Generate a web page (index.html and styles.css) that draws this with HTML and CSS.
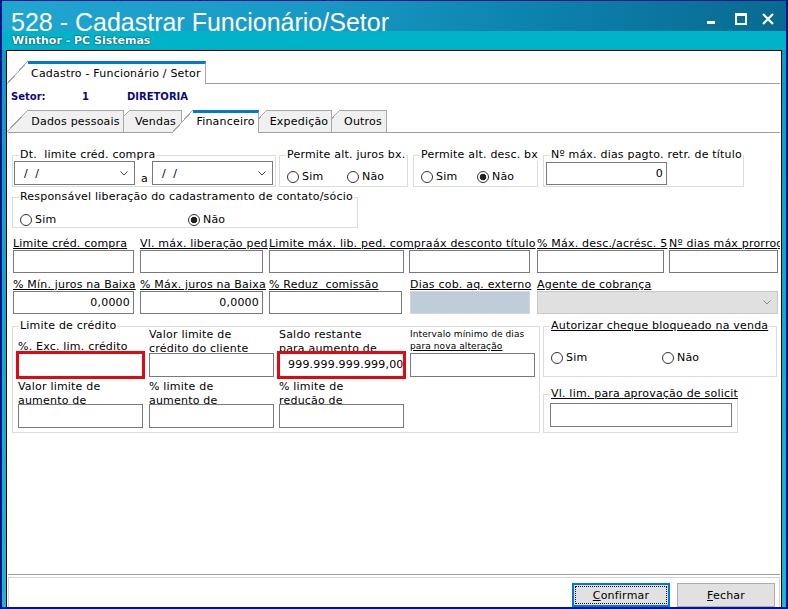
FILE: index.html
```html
<!DOCTYPE html>
<html>
<head>
	<meta charset="UTF-8">
	<title>528 - Cadastrar Funcionário/Setor</title>
	<link rel="stylesheet" href="styles.css">
</head>
<body>
<div class="window">
	<div class="titlebar">
		<div class="caption">
			<div class="title">528 - Cadastrar Funcionário/Setor</div>
			<div class="vendor">Winthor - PC Sistemas</div>
		</div>
		<div class="controls">
			<span class="min"></span>
			<span class="max"></span>
			<svg class="close" width="12" height="12" viewBox="0 0 12 12"><path d="M1 1L11 11M11 1L1 11" stroke="#fff" stroke-width="2.2"/></svg>
		</div>
	</div>
	<div class="frame">
		<div class="content">
			<div class="tabs top">
				<div class="tab on">Cadastro - Funcionário / Setor</div>
			</div>
			<div class="setor"><strong>Setor:</strong><strong>1</strong><strong>DIRETORIA</strong></div>
			<div class="tabs inner">
				<div class="tab">Dados pessoais</div>
				<div class="tab">Vendas</div>
				<div class="tab on">Financeiro</div>
				<div class="tab">Expedição</div>
				<div class="tab">Outros</div>
			</div>

			<div class="page">
				<div class="row">
					<fieldset class="g g-dt">
						<legend>Dt.&nbsp; limite créd. compra</legend>
						<div class="dt">
							<div class="combo"><span>/&nbsp; /</span><svg width="8" height="5" viewBox="0 0 8 5"><path d="M.5 .5L4 4L7.5 .5" fill="none" stroke="#444"/></svg></div>
							<span class="a">a</span>
							<div class="combo"><span>/&nbsp; /</span><svg width="8" height="5" viewBox="0 0 8 5"><path d="M.5 .5L4 4L7.5 .5" fill="none" stroke="#444"/></svg></div>
						</div>
					</fieldset>
					<fieldset class="g g-juros">
						<legend>Permite alt. juros bx.</legend>
						<div class="opts">
							<span class="radio"><i></i>Sim</span>
							<span class="radio"><i></i>Não</span>
						</div>
					</fieldset>
					<fieldset class="g g-desc">
						<legend>Permite alt. desc. bx</legend>
						<div class="opts">
							<span class="radio"><i></i>Sim</span>
							<span class="radio on"><i></i>Não</span>
						</div>
					</fieldset>
					<fieldset class="g g-dias">
						<legend>Nº máx. dias pagto. retr. de título</legend>
						<div class="edit num">0</div>
					</fieldset>
				</div>

				<div class="row r2">
					<fieldset class="g g-resp">
						<legend>Responsável liberação do cadastramento de contato/sócio</legend>
						<div class="opts">
							<span class="radio"><i></i>Sim</span>
							<span class="radio on"><i></i>Não</span>
						</div>
					</fieldset>
				</div>

				<div class="fields r3">
					<div class="f c1"><span class="lbl"><span>Limite créd. compra</span></span><div class="edit"></div></div>
					<div class="f c2 cut"><span class="lbl"><span>Vl. máx. liberação ped</span></span><div class="edit"></div></div>
					<div class="f c3 over"><span class="lbl"><span>Limite máx. lib. ped. compra</span></span><div class="edit"></div></div>
					<div class="f c4"><span class="lbl"><span>% Máx desconto título</span></span><div class="edit"></div></div>
					<div class="f c5 cut"><span class="lbl"><span>% Máx. desc./acrésc. 5</span></span><div class="edit"></div></div>
					<div class="f c6 over"><span class="lbl"><span>Nº dias máx prorrog</span></span><div class="edit"></div></div>
				</div>

				<div class="fields r4">
					<div class="f c1"><span class="lbl"><span>% Mín. juros na Baixa</span></span><div class="edit num">0,0000</div></div>
					<div class="f c2"><span class="lbl"><span>% Máx. juros na Baixa</span></span><div class="edit num">0,0000</div></div>
					<div class="f d3"><span class="lbl"><span>% Reduz&nbsp; comissão</span></span><div class="edit"></div></div>
					<div class="f d4"><span class="lbl"><span>Dias cob. aq. externo</span></span><div class="edit off"></div></div>
					<div class="f d5"><span class="lbl"><span>Agente de cobrança</span></span><div class="combo off"><span></span><svg width="8" height="5" viewBox="0 0 8 5"><path d="M.5 .5L4 4L7.5 .5" fill="none" stroke="#8a8a8a"/></svg></div></div>
				</div>

				<div class="row r5">
					<fieldset class="g g-lim">
						<legend>Limite de crédito</legend>
						<div class="grid">
							<div><span class="cap one"><span class="u">%. Exc. lim. crédito</span></span><div class="edit mark"></div></div>
							<div><span class="cap">Valor limite de crédito do cliente</span><div class="edit"></div></div>
							<div><span class="cap">Saldo restante para aumento de</span><div class="edit mark val">999.999.999.999,00</div></div>
							<div><span class="cap small">Intervalo mínimo de dias <span class="u">para nova alteração</span></span><div class="edit"></div></div>
							<div class="b"><span class="cap">Valor limite de aumento de</span><div class="edit"></div></div>
							<div class="b"><span class="cap">% limite de aumento de</span><div class="edit"></div></div>
							<div class="b"><span class="cap">% limite de redução de</span><div class="edit"></div></div>
						</div>
					</fieldset>
					<div class="side">
						<fieldset class="g g-aut">
							<legend class="u">Autorizar cheque bloqueado na venda</legend>
							<div class="opts">
								<span class="radio"><i></i>Sim</span>
								<span class="radio"><i></i>Não</span>
							</div>
						</fieldset>
						<fieldset class="g g-vl">
							<legend class="u">Vl. lim. para aprovação de solicit</legend>
							<div class="edit"></div>
						</fieldset>
					</div>
				</div>
			</div>

			<div class="buttons">
				<button class="btn def"><u>C</u>onfirmar</button>
				<button class="btn"><u>F</u>echar</button>
			</div>
		</div>
	</div>
</div>
</body>
</html>
```

FILE: styles.css
```css
* { box-sizing: border-box; }
html, body { margin: 0; }
body { font: 11px "DejaVu Sans", "Liberation Sans", sans-serif; letter-spacing: .2px; color: #000; background: #0b1487; }

/* window chrome */
.window { width: 788px; height: 609px; display: flex; flex-direction: column; border: 2px solid #0b1487; border-top-width: 1px; }
.titlebar { flex: none; height: 49px; display: flex; justify-content: space-between; color: #fff;
	background: linear-gradient(to bottom, rgba(0,0,0,0) 30px, #00b3c8 30px),
		linear-gradient(100deg, #1fa6d1 0%, #1899c5 40%, #0c82ad 68%, #086990 100%); }
.caption { padding: 10px 0 0 9px; }
.title { font: 25px/23px "Liberation Sans", Arial, sans-serif; letter-spacing: 0; }
.vendor { margin-top: 1px; font-weight: bold; line-height: 12px; letter-spacing: 0; padding-left: 1px; text-shadow: 0 0 2px #03465a, 0 0 1px #03465a; }
.controls { display: flex; align-items: flex-start; padding: 12px 12px 0 0; }
.min { width: 8px; height: 3px; margin-top: 8px; background: #fff; }
.max { width: 12px; height: 12px; margin-left: 20px; border: 2px solid #fff; border-top-width: 3px; }
.close { margin-left: 15px; }
.frame { flex: 1; display: flex; padding: 0 4px; background: linear-gradient(#0e9cc2, #1db5d2); }
.content { flex: 1; display: flex; flex-direction: column; background: #fff; border: 1px solid #000; border-bottom: 0; overflow: hidden; }

/* tab strips: the slanted left side is a diagonal drawn in ::before */
.tabs { flex: none; display: flex; align-items: flex-end; height: 23px; margin: 0 1px; border-bottom: 1px solid #a0a0a0; }
.tabs.top { margin-top: 10px; }
.tabs.inner { margin-top: 7px; }
.tab { position: relative; z-index: 1; height: 22px; padding: 3px 4px 0 3px; line-height: 16px; white-space: nowrap;
	border-top: 1px solid #a8a8a8; border-right: 1px solid #a8a8a8; background: #f0f0f0; }
.tab::before { content: ""; position: absolute; left: -21px; top: -1px; bottom: 0; width: 21px;
	background: linear-gradient(to bottom right, rgba(255,255,255,0) calc(50% - .6px), #a8a8a8 calc(50% - .6px), #a8a8a8 calc(50% + .5px), #f0f0f0 calc(50% + .5px)); }
.tab:first-child { margin-left: 20px; }
.tab.on { z-index: 9; height: 23px; margin-bottom: -1px; padding-top: 1px; border-top: 3px solid #0078d7; background: #fff; }
.tab.on::before { top: -3px;
	background: linear-gradient(to bottom right, rgba(255,255,255,0) calc(50% - .6px), #a8a8a8 calc(50% - .6px), #a8a8a8 calc(50% + .5px), #fff calc(50% + .5px)); }
.tabs.top .tab.on { padding-top: 2px; }

.inner .tab { padding: 3px 0 0; text-align: center; }
.inner .tab:nth-child(1) { z-index: 6; width: 96px; }
.inner .tab:nth-child(2) { z-index: 5; width: 52px; margin-left: 6px; }
.inner .tab:nth-child(3) { z-index: 9; width: 66px; margin-left: 11px; padding-top: 1px; }
.inner .tab:nth-child(4) { z-index: 3; width: 65px; margin-left: 8px; }
.inner .tab:nth-child(5) { z-index: 2; width: 47px; margin-left: 8px; }

.setor { flex: none; display: flex; margin-top: 7px; padding-left: 4px; height: 12px; line-height: 12px; font-size: 10px; color: #0a0a80; letter-spacing: 0; }
.setor strong:nth-child(1) { width: 71px; }
.setor strong:nth-child(2) { width: 45px; }

/* tab page */
.page { flex: none; height: 442px; margin: 0 1px; padding: 16px 0 0 4px; border-bottom: 1px solid #a0a0a0; overflow: hidden; }
.row { display: flex; align-items: stretch; }
.r2 { margin-top: 4px; }
.r5 { margin-top: 6px; align-items: flex-start; }

.g { margin: 0; padding: 0; min-width: 0; border: 1px solid #dcdcdc; }
.g legend { margin-left: 6px; padding: 0 1px; line-height: 12px; white-space: nowrap; }
.u { text-decoration: underline; }

.g-dt { width: 264px; }
.g-juros { width: 129px; margin-left: 3px; }
.g-desc { width: 125px; margin-left: 5px; }
.g-dias { width: 201px; margin-left: 5px; }
.g-resp { width: 346px; }

.dt { display: flex; align-items: flex-end; padding: 0 1px 1px; }
.a { margin: 0 4px 0 6px; line-height: 12px; }
.combo { width: 121px; height: 24px; display: flex; align-items: center; justify-content: space-between; padding: 0 6px 0 9px; border: 1px solid #7a7a7a; background: #fff; }
.combo.off { height: 23px; background: #e0e0e0; border-color: #c8c8c8; }

.opts { display: flex; padding: 10px 0 0 7px; }
.g-resp .opts { padding: 11px 0 1px 7px; }
.radio { display: flex; align-items: center; gap: 3px; line-height: 12px; }
.radio i { width: 12px; height: 12px; border: 1px solid #333; border-radius: 50%; background: #fff; }
.radio.on i { background: radial-gradient(circle, #222 0 3px, #fff 3.6px); }
.g-juros .radio:first-child { width: 60px; }
.g-desc .radio:first-child { width: 56px; }
.g-resp .radio:first-child { width: 168px; }
.g-aut .radio:first-child { width: 111px; }

.edit { height: 23px; border: 1px solid #7a7a7a; background: #fff; }
.edit.num { text-align: right; padding-right: 3px; line-height: 21px; }
.edit.off { background: #bfccd9; border-color: #cfd6dd; }
.g-dias .edit { width: 121px; margin: 1px 0 0 2px; }

/* label over field rows */
.fields { display: flex; padding-left: 1px; }
.r3 { margin-top: 10px; }
.r4 { margin-top: 6px; }
.f { position: relative; z-index: 1; flex: none; }
.f.over { z-index: 2; }
.lbl { display: block; height: 12px; line-height: 12px; white-space: nowrap; }
.lbl span { background: #fff; text-decoration: underline; }
.f.cut .lbl { overflow: hidden; }
.c1 { width: 127px; }
.c1 .edit { width: 121px; }
.c2 { width: 129px; }
.c2 .edit { width: 123px; }
.c3 { width: 140px; }
.c3 .edit { width: 135px; }
.c4 { width: 128px; }
.c4 .edit { width: 121px; }
.c5 { width: 132px; }
.c5 .edit { width: 127px; }
.c6 { width: 109px; }
.c6 .edit { width: 109px; }
.d3 { width: 141px; }
.d3 .edit { width: 133px; }
.d4 { width: 127px; }
.d4 .edit { width: 120px; }
.d5 { width: 241px; }
.d5 .combo { width: 241px; }

/* credit limit group */
.g-lim { width: 528px; }
.grid { display: grid; grid-template-columns: 131px 130px 131px 125px; margin: -4px 0 0 5px; padding-bottom: 4px; }
.grid > div:nth-child(-n+4) .cap { height: 25px; }
.grid .b { margin-top: 3px; }
.cap { display: block; width: 100px; height: 24px; line-height: 14px; overflow: hidden; }
.cap.one { width: auto; padding-top: 12px; white-space: nowrap; }
.cap.small { width: 125px; font-size: 9px; line-height: 12px; letter-spacing: .1px; }
.grid .edit { width: 125px; height: 24px; }
.edit.mark { outline: 3px solid #e30613; outline-offset: -1px; }
.edit.val { padding-left: 8px; line-height: 22px; white-space: nowrap; overflow: hidden; }

.side { margin-left: 3px; width: 234px; }
.g-aut { width: 234px; }
.g-aut .opts { padding: 20px 0 12px 7px; }
.g-vl { width: 195px; margin-top: 11px; padding-bottom: 5px; }
.g-vl .edit { width: 182px; height: 24px; margin: 3px 0 0 6px; }

/* bottom button bar */
.buttons { flex: 1; display: flex; justify-content: flex-end; gap: 7px; margin: 2px 1px 0; padding: 5px 4px 0 0; border: 1px solid #d4d4d4; border-bottom: 0; overflow: hidden; }
.btn { flex: none; width: 98px; height: 24px; padding: 0; font: inherit; letter-spacing: inherit; color: #000; background: #e1e1e1; border: 1px solid #adadad; }
.btn.def { border: 2px solid #0078d7; outline: 1px dotted #000; outline-offset: -4px; }
```
